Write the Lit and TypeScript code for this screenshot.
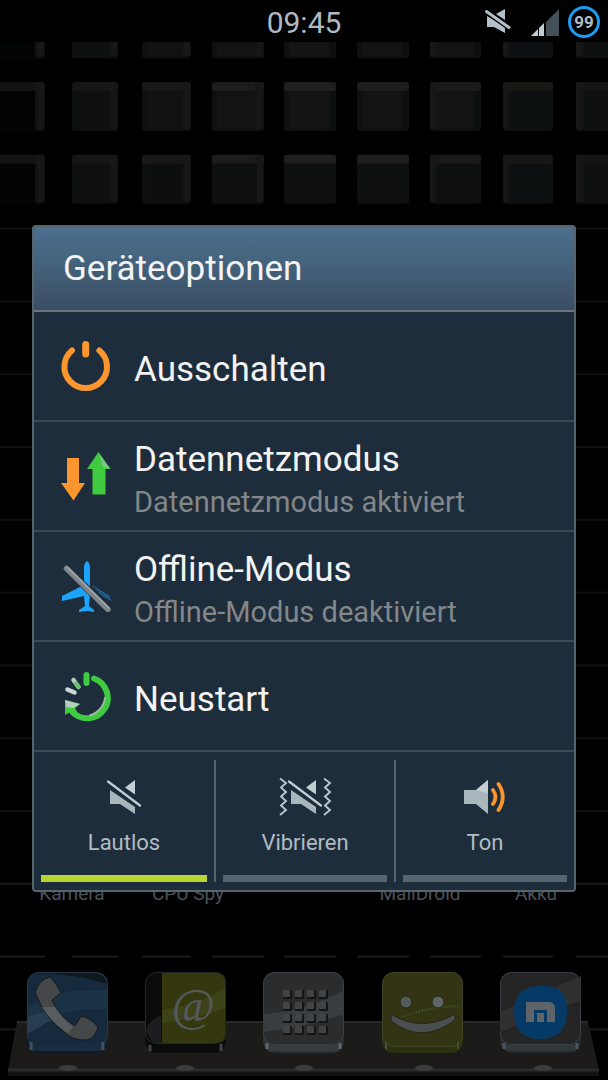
import { LitElement, html, svg, css } from "lit";
import { customElement, state } from "lit/decorators.js";

const power = svg`<svg viewBox="0 0 52 52" aria-hidden="true" fill="none" stroke="#fa962d" stroke-linecap="round">
  <path d="M12 10.500A21.300 21.300 0 1 0 39.400 10.500" stroke-width="6"/>
  <path d="M25.700 4.500V14" stroke-width="7"/></svg>`;

const data = svg`<svg viewBox="0 0 52 52" aria-hidden="true">
  <path d="M7 8H19V33H25L13.500 50.500L1 33H7Z" fill="#fa962d"/>
  <path d="M32.500 44.500V19H27L38.500 2L50.500 19H45.500V44.500Z" fill="#3fca3f"/>
  <path d="M39 4L50 18.500L43 17Z" fill="#7cc487"/></svg>`;

const plane = svg`<svg viewBox="0 0 52 52" aria-hidden="true">
  <path d="M27 1Q24 3 24 8V25L2 36V41L24 36L25 46L19 50V52L27 51L34 52V50L29 46L30 34V8Q30 3 27 1Z" fill="#1ca3fa"/>
  <path d="M32 26L49 35L51 41L43 37Z" fill="#1e4a68"/>
  <path d="M33 26L50 37M39 32L51 40" stroke="#1d84c8" stroke-width="1" stroke-dasharray="2 1"/>
  <path d="M6 8L49 50" stroke="#1e2d3c" stroke-width="7"/>
  <path d="M6.500 8.500L48 49.500" stroke="#7d848b" stroke-width="5.500" stroke-linecap="round"/>
  <path d="M7 7L49 48" stroke="#a3a8ac" stroke-width="1.500" stroke-linecap="round"/></svg>`;

const restart = svg`<svg viewBox="0 0 52 52" aria-hidden="true" fill="none" stroke-linecap="round">
  <path d="M34 8.500A20.500 20.500 0 1 1 12.400 42" stroke="#3fca3f" stroke-width="6"/>
  <path d="M45 28C44 36 38 43 30 45.500" stroke="#9bbd9e" stroke-width="2"/>
  <path d="M26.500 5V13" stroke="#3fca3f" stroke-width="6"/>
  <path d="M13.500 10L18.500 17" stroke="#b9ccc5" stroke-width="4.500"/>
  <path d="M16 13.500L18.500 17" stroke="#62c46b" stroke-width="4"/>
  <path d="M7.500 19.500L14.500 22.500" stroke="#cdd5d8" stroke-width="4.500"/>
  <path d="M5 30L20 34L15 38L19 45L12 41L5 45Z" fill="#3fca3f"/>
  <path d="M5 30L20 34L14 38L6 37Z" fill="#b5cdbd"/></svg>`;

const mutedShape = svg`
  <path d="M29 1V15.500L19 8.500Z" fill="#c3ced4"/>
  <path d="M4 11L29 28V35L14 25H4Z" fill="#a9b6be"/>
  <path d="M2 2.500L34 26.500" stroke="#1e2d3b" stroke-width="5"/>
  <path d="M2 2.500L34 26.500" stroke="#c3ced4" stroke-width="2.200" stroke-linecap="round"/>`;

const muted = svg`<svg viewBox="0 0 36 36" width="36" height="36" aria-hidden="true">${mutedShape}</svg>`;

const vibrate = svg`<svg viewBox="0 0 54 40" width="54" height="40" aria-hidden="true">
  <g transform="translate(9 2)">${mutedShape}</g>
  <path d="M2 1.500L8 6L3 10.500L8 15L3 19.500L8 24L3 28.500L8 33L2 38M46 1.500L52 6L47 10.500L52 15L47 19.500L52 24L47 28.500L52 33L46 38"
    fill="none" stroke="#b9c5cc" stroke-width="1.900"/></svg>`;

const sound = svg`<svg viewBox="0 0 42 36" width="42" height="36" aria-hidden="true">
  <path d="M0 11H12L24 1V35L12 25H0Z" fill="#a9b6be"/>
  <path d="M12 11L24 1V14Z" fill="#c3ced4"/>
  <path d="M29 11Q34 18 29 25M34.500 5Q43 18 34.500 31" fill="none" stroke="#fa962d" stroke-width="3.800" stroke-linecap="round"/></svg>`;

const statusMuted = svg`<svg viewBox="0 0 26 26" width="26" height="26" aria-hidden="true">
  <path d="M20 0V11L11 5Z" fill="#b4bfc7"/><path d="M2 7L20 18V24L9 18H2Z" fill="#b4bfc7"/>
  <path d="M2 3L23.500 18.500" stroke="#000" stroke-width="5"/>
  <path d="M1.500 2.500L24 18.500" stroke="#b4bfc7" stroke-width="3" stroke-linecap="round"/></svg>`;

const signal = svg`<svg viewBox="0 0 28 28" width="28" height="28" aria-hidden="true">
  <path d="M0 27L7 20V27Z" fill="#c3ced4"/><path d="M8 27V19L13 14V27Z" fill="#c3ced4"/>
  <path d="M15 27V13L28 0V27Z" fill="#444f58"/></svg>`;

/* Faces of the dock tiles, each drawn on an 81 by 81 square */
const phoneFace = svg`<rect width="81" height="81" rx="12" fill="#0d1b27"/>
  <rect y="0.500" x="0.500" width="80" height="74" rx="11" fill="#152a3d" stroke="#263645"/>
  <path d="M12 1H69Q78 3 80 12Q50 2 12 1Z" fill="#10171d"/>
  <path d="M0 36Q28 16 81 18V37Q34 35 0 58Z" fill="#1a3346"/>
  <path d="M0 45Q20 36 30 45L0 62Z" fill="#283e4e"/>
  <path d="M5 72H76V79H5Z" fill="#182e40"/><path d="M4 70V78M76 70V78" stroke="#3e5260" stroke-width="3"/>
  <path d="M8 20Q13 7 23 5Q30 12 34 21L25 28Q32 44 48 54L54 44Q64 46 71 55Q68 66 60 68Q46 69 37 60Q18 46 8 20Z" fill="#454749" stroke="#15191d"/>
  <path d="M15 35L28 35Q37 49 46 55L41 61Q24 50 15 35Z" fill="#585c5e"/>`;

const mailFace = svg`<rect width="81" height="81" rx="12" fill="#0a0c0c"/>
  <path d="M17 0H69Q81 0 81 12V62Q81 71 72 71H17Z" fill="#35370f"/>
  <path d="M17 38Q58 32 81 15V36Q50 47 17 51Z" fill="#3e4219"/>
  <rect x="0.500" y="0.500" width="80" height="71" rx="11" fill="none" stroke="#24272a"/>
  <path d="M1 59Q4 47 16 44V71H8Z" fill="#1b1d1f"/>
  <path d="M5 73V79M76 72V79" stroke="#42474a" stroke-width="3"/>
  <text x="48" y="49" text-anchor="middle" class="at">@</text>`;

const appsFace = svg`<rect width="81" height="81" rx="12" fill="#2b3034"/>
  <rect x="0.500" y="0.500" width="80" height="72" rx="11" fill="#2b2c2d" stroke="#3b4146"/>
  <path d="M0 42Q40 40 81 18V42Q44 55 0 60Z" fill="#3a3d3f"/>
  <path d="M5 73H76V79H5Z" fill="#363c40"/><path d="M4 71V77M77 71V77" stroke="#5f666b" stroke-width="3"/>
  ${[0, 1, 2, 3].map((r) => [0, 1, 2, 3].map((c) => svg`<rect x=${20 + c * 12} y=${18 + r * 12} width="9" height="9" rx="1" fill="#141516"/>
  <rect x=${20 + c * 12} y=${18 + r * 12} width="7" height="7" rx="1" fill="#414446"/>`))}`;

const smileFace = svg`<rect width="81" height="81" rx="12" fill="#2d3011"/>
  <rect x="0.500" y="0.500" width="80" height="74" rx="11" fill="#323413" stroke="#404325"/>
  <path d="M20 45Q45 35 78 34" stroke="#41651e" stroke-width="2" stroke-dasharray="1 2" fill="none"/>
  <circle cx="24" cy="30" r="6" fill="#54595a" stroke="#24260f"/><circle cx="56" cy="30" r="6" fill="#5f6566" stroke="#24260f"/>
  <path d="M9 42Q40 61 73 42V48Q40 73 9 49Z" fill="#4a4e50" stroke="#24260f"/>
  <path d="M4 70V77M76 70V77" stroke="#4b4e2e" stroke-width="2"/>`;

const browserFace = svg`<rect width="81" height="81" rx="12" fill="#25292c"/>
  <rect x="0.500" y="0.500" width="80" height="72" rx="11" fill="#252424" stroke="#3b4146"/>
  <path d="M0 40L81 4V28L0 60Z" fill="#303030"/>
  <path d="M5 73H76V79H5Z" fill="#32373a"/><path d="M4 71V77M77 71V77" stroke="#50575c" stroke-width="3"/>
  <path d="M40 14Q67 12 67 38Q67 67 40 67Q14 67 14 40Q14 14 40 14Z" fill="#053a66"/>
  <path d="M26 50V30H49Q55 30 55 37V50H47V38H34V50Z" fill="#5e6468"/><rect x="37" y="41" width="7" height="9" fill="#5e6468"/>`;

const dockApps = [
  { name: "Telefon", face: phoneFace },
  { name: "E-Mail", face: mailFace },
  { name: "Apps", face: appsFace },
  { name: "Nachrichten", face: smileFace },
  { name: "Browser", face: browserFace },
];

const options = [
  { title: "Ausschalten", note: "", icon: power },
  { title: "Datennetzmodus", note: "Datennetzmodus aktiviert", icon: data },
  { title: "Offline-Modus", note: "Offline-Modus deaktiviert", icon: plane },
  { title: "Neustart", note: "", icon: restart },
];

const modes = [
  { id: "mute", title: "Lautlos", icon: muted },
  { id: "vibrate", title: "Vibrieren", icon: vibrate },
  { id: "sound", title: "Ton", icon: sound },
];

@customElement("home-wallpaper")
export class HomeWallpaper extends LitElement {
  static styles = css`
    :host { display: block; }
    svg { display: block; width: 100%; height: 100%; }
  `;

  private tile(col: number, row: number) {
    const x = [-6, 72, 142, 212, 284, 357, 430, 503, 576][col];
    const w = [51, 46, 49, 52, 52, 52, 51, 50, 50][col];
    const y = row * 72.8 - 32.8;
    const glow = Math.max(0, 1 - Math.abs(col - 4.2) / 5);
    if (row > 2) {
      return svg`<rect x=${x} y=${y} width=${w} height="2" fill=${row > 11 ? "#17191a" : "#0e0f10"}/>`;
    }
    return svg`
      <rect x=${x} y=${y} width=${w} height="49" rx="3" fill="#0e0f0f"/>
      <rect x=${x} y=${y} width=${w} height="9" rx="3" fill="#22201e" opacity=${0.1 + glow * 0.9}/>
      ${col < 4 ? svg`<rect x=${x + w - 9} y=${y} width="8" height="47" rx="2" fill="#171717"/>` : null}
      ${col > 5 ? svg`<rect x=${x} y=${y} width="8" height="47" rx="2" fill="#171717"/>` : null}
      <rect x=${x + 5} y=${y + 9} width=${w - 12} height="38" rx="2" fill=${row < 2 && glow > 0.5 ? "#151414" : "#0e1010"} opacity=${0.4 + glow * 0.6}/>
      ${col === 0 ? svg`<rect x="0" y=${y + 9} width="35" height="41" fill="#020303"/>` : null}`;
  }

  render() {
    const rows = Array.from({ length: 15 }, (_, i) => i);
    const cols = Array.from({ length: 9 }, (_, i) => i);
    return html`<svg viewBox="0 0 608 1038" preserveAspectRatio="xMidYMin slice" aria-hidden="true">
      ${rows.map((r) => cols.map((c) => this.tile(c, r)))}
    </svg>`;
  }
}

@customElement("status-bar")
export class StatusBar extends LitElement {
  static styles = css`
    :host {
      display: grid;
      grid-template-columns: 1fr auto 1fr;
      align-items: center;
      height: 42px;
      background: #000;
      color: #aeb9c2;
    }
    .time { grid-column: 2; font-size: 30px; line-height: 42px; padding-top: 2px; }
    .icons { display: flex; justify-content: flex-end; align-items: center; padding-right: 8px; }
    .icons svg { display: block; }
    .gap { margin: 0 9px 0 20px; padding-top: 2px; }
    .battery {
      box-sizing: border-box;
      width: 32px;
      height: 32px;
      border: 3px solid #1c9df5;
      border-radius: 50%;
      font-size: 17px;
      font-weight: 700;
      line-height: 26px;
      text-align: center;
    }
  `;

  render() {
    return html`
      <time class="time">09:45</time>
      <div class="icons">
        ${statusMuted}
        <span class="gap">${signal}</span>
        <span class="battery">99</span>
      </div>`;
  }
}

@customElement("device-options")
export class DeviceOptions extends LitElement {
  @state() private mode = "mute";

  static styles = css`
    :host { display: block; }
    .dialog {
      border: 2px solid #56626c;
      border-radius: 4px;
      background: #1e2d3b;
      color: #f3f3f3;
      overflow: hidden;
    }
    .title {
      margin: 0;
      padding: 0 29px;
      font-size: 35px;
      font-weight: 400;
      line-height: 83px;
      background: linear-gradient(#4b6f8d, #456580 35%, #3a4e63);
      border-bottom: 2px solid #6b747c;
    }
    .list { margin: 0; padding: 0; list-style: none; }
    .item { border-bottom: 2px solid #3d4a56; }
    .option {
      display: flex;
      align-items: center;
      gap: 22px;
      width: 100%;
      height: 108px;
      padding: 0 26px;
      border: 0;
      background: none;
      color: inherit;
      font: inherit;
      text-align: left;
    }
    .option svg { display: block; flex: none; width: 52px; height: 52px; }
    .text { display: flex; flex-direction: column; padding-top: 8px; }
    .name { font-size: 35px; line-height: 44px; }
    .note { font-size: 29px; line-height: 40px; color: #848789; }
    .modes {
      display: grid;
      grid-template-columns: repeat(3, 1fr);
      margin: 0;
      padding: 8px 0;
      border: 0;
    }
    .mode {
      display: flex;
      flex-direction: column;
      align-items: center;
      height: 122px;
      color: #b0bbc3;
      font-size: 22px;
      line-height: 30px;
    }
    .mode + .mode { border-left: 2px solid #56626c; }
    .glyph { display: flex; align-items: center; height: 62px; padding-top: 6px; }
    .radio { position: absolute; opacity: 0; width: 1px; height: 1px; margin: 0; }
    .bar { width: calc(100% - 14px); height: 7px; margin-top: auto; background: #56646f; }
    .radio:checked ~ .bar { background: #b8d430; }
  `;

  render() {
    return html`
      <section class="dialog" role="dialog" aria-labelledby="title">
        <h1 class="title" id="title">Geräteoptionen</h1>
        <ul class="list">
          ${options.map((o) => html`
            <li class="item">
              <button class="option" type="button">
                ${o.icon}
                <span class="text">
                  <span class="name">${o.title}</span>
                  ${o.note ? html`<span class="note">${o.note}</span>` : null}
                </span>
              </button>
            </li>`)}
        </ul>
        <div class="modes" role="radiogroup">
          ${modes.map((m) => html`
            <label class="mode">
              <input class="radio" type="radio" name="mode" .checked=${this.mode === m.id}
                @change=${() => { this.mode = m.id; }} />
              <span class="glyph">${m.icon}</span>
              <span>${m.title}</span>
              <span class="bar"></span>
            </label>`)}
        </div>
      </section>`;
  }
}

@customElement("app-root")
export class AppRoot extends LitElement {
  static styles = css`
    :host {
      display: block;
      font-family: Roboto, "Noto Sans", sans-serif;
      background: #000;
    }
    .screen {
      position: relative;
      display: flex;
      flex-direction: column;
      min-height: 100vh;
    }
    .wallpaper { position: absolute; inset: 42px 0 0; overflow: hidden; }
    status-bar { position: relative; }
    .labels {
      position: relative;
      display: grid;
      grid-template-columns: repeat(5, 1fr);
      margin-top: auto;
      padding: 0 14px;
      color: #4a5259;
      font-size: 19px;
      line-height: 24px;
      text-align: center;
    }
    .dock {
      position: relative;
      display: grid;
      grid-template-columns: repeat(5, 1fr);
      justify-items: center;
      margin-top: 66px;
      padding: 0 8px 27px;
    }
    .shelf { position: absolute; left: 0; bottom: 0; width: 100%; height: 60px; }
    .app { position: relative; display: block; width: 81px; height: 81px; padding: 0; border: 0; background: none; }
    .app svg { display: block; width: 100%; height: 100%; }
    .at { font: italic 47px "Liberation Serif", serif; fill: #54595c; }
    .overlay {
      position: absolute;
      inset: 42px 0 0;
      display: flex;
      align-items: center;
      padding: 0 32px 5px;
    }
    device-options { flex: 1; }
  `;

  render() {
    return html`
      <main class="screen">
        <home-wallpaper class="wallpaper"></home-wallpaper>
        <status-bar></status-bar>
        <div class="labels">
          <span>Kamera</span><span>CPU Spy</span><span></span><span>MailDroid</span><span>Akku</span>
        </div>
        <nav class="dock">
          <svg class="shelf" viewBox="0 0 608 60" preserveAspectRatio="none" aria-hidden="true">
            <path d="M17 2H588L599 50H8Z" fill="#1c1b1a"/>
            <path d="M17 2H588" stroke="#292827" stroke-width="2"/>
            <path d="M8 50H599V56H8Z" fill="#111313"/>
            <path d="M8 50H599" stroke="#2a2b2b" stroke-width="3"/>
            ${[68, 185, 304, 424, 543].map((x) => svg`<ellipse cx=${x} cy="48" rx="9" ry="3" fill="#3b3c3d"/>`)}
          </svg>
          ${dockApps.map((a) => html`
            <button class="app" type="button" aria-label=${a.name}>
              <svg viewBox="0 0 81 81" aria-hidden="true">${a.face}</svg>
            </button>`)}
        </nav>
        <div class="overlay"><device-options></device-options></div>
      </main>`;
  }
}
